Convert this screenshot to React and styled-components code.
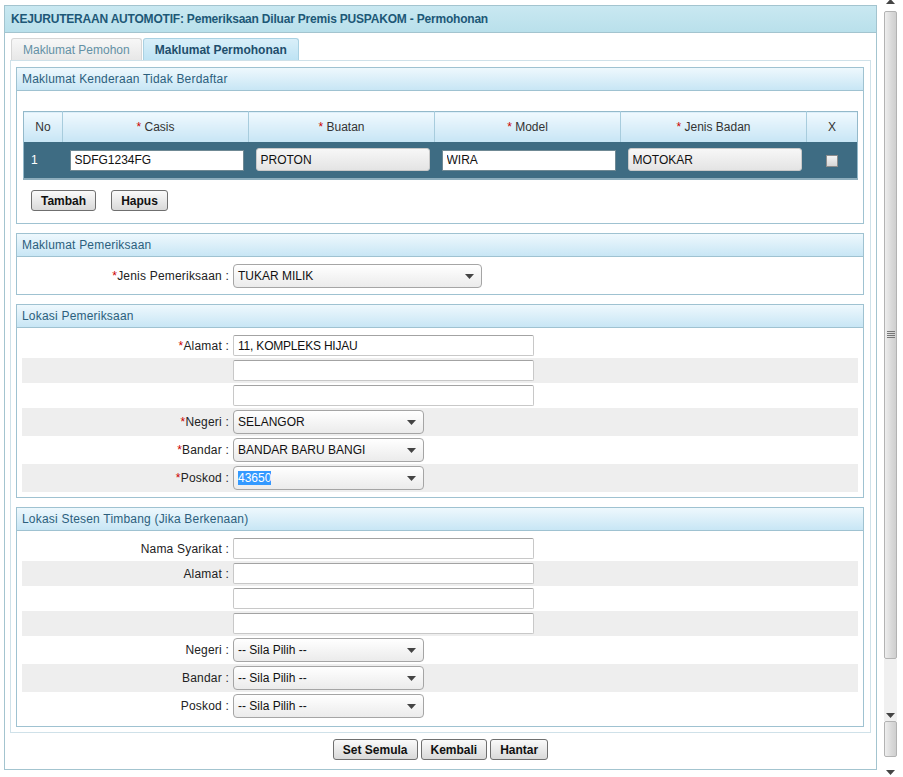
import React from "react";
import styled, { createGlobalStyle } from "styled-components";

const GlobalStyle = createGlobalStyle`
  html, body {
    margin: 0;
    padding: 0;
    background: #fff;
  }
  body {
    font-family: "Liberation Sans", Arial, sans-serif;
    font-size: 12px;
    color: #222;
  }
`;

const Page = styled.div`
  display: flex;
  height: 777px;
  overflow: hidden;
`;

const Main = styled.div`
  flex: 1;
  padding: 5px 2px 0 4px;
`;

const Panel = styled.div`
  border: 1px solid #a3c4cf;
`;

const PanelHeader = styled.div`
  height: 26px;
  line-height: 26px;
  padding-left: 6px;
  background: linear-gradient(#c9e8f1, #b9e0eb);
  border-bottom: 1px solid #a3c4cf;
  color: #1d5877;
  font-weight: bold;
  letter-spacing: -0.2px;
`;

const PanelBody = styled.div`
  padding: 5px 5px 9px 5px;
`;

const Tabs = styled.div`
  display: flex;
  gap: 1px;
  padding-left: 1px;
  height: 22px;
`;

const Tab = styled.div`
  height: 22px;
  line-height: 22px;
  padding: 0 11px;
  box-sizing: border-box;
  border: 1px solid ${(p) => (p.$active ? "#a9d1e2" : "#d6d6d6")};
  border-bottom: none;
  border-radius: 3px 3px 0 0;
  background: ${(p) =>
    p.$active
      ? "linear-gradient(#d9eff9, #bee3f4)"
      : "linear-gradient(#f7f7f7, #e7e7e7)"};
  color: ${(p) => (p.$active ? "#1e4e6c" : "#6390a5")};
  font-weight: ${(p) => (p.$active ? "bold" : "normal")};
`;

const TabPanel = styled.div`
  border: 1px solid #cfe1e9;
  padding: 6px 6px 5px 5px;
`;

const Section = styled.div`
  border: 1px solid #9fc2d1;
  background: #fff;
  & + & {
    margin-top: 9px;
  }
`;

const SectionHeader = styled.div`
  height: 22px;
  line-height: 22px;
  padding-left: 5px;
  background: linear-gradient(#eef8fd, #c8e6f5);
  border-bottom: 1px solid #9fc2d1;
  color: #2c5f7d;
  letter-spacing: 0.2px;
`;

const TableWrap = styled.div`
  padding: 20px 5px 0 6px;
`;

const Grid = styled.table`
  width: 834px;
  border-collapse: collapse;
  table-layout: fixed;
  border: 1px solid #94b9ca;
`;

const HeadCell = styled.th`
  height: 30px;
  padding: 0;
  font-weight: normal;
  color: #333;
  text-align: center;
  background: linear-gradient(#f0f9fe, #c7e5f5);
  border-left: 1px solid #a7ccdd;
  &:first-child {
    border-left: none;
  }
`;

const DataRow = styled.tr`
  background: #3e6c83;
  border-bottom: 2px solid #8eaebd;
`;

const DataCell = styled.td`
  height: 36px;
  padding: 0;
  padding-left: ${(p) => (p.$center ? "0" : "7px")};
  color: #fff;
  text-align: ${(p) => (p.$center ? "center" : "left")};
`;

const CellInput = styled.input`
  display: block;
  box-sizing: border-box;
  width: 174px;
  height: ${(p) => (p.$shaded ? "23px" : "21px")};
  margin-top: ${(p) => (p.$shaded ? "-1px" : "0")};
  padding: 0 4px;
  font: 12px "Liberation Sans", Arial, sans-serif;
  color: #111;
  border: 1px solid ${(p) => (p.$shaded ? "#c9c9c9" : "#6f8994")};
  border-radius: ${(p) => (p.$shaded ? "3px" : "0")};
  background: ${(p) =>
    p.$shaded ? "linear-gradient(#f7f7f7, #e4e4e4)" : "#fff"};
  outline: none;
`;

const Check = styled.span`
  display: inline-block;
  width: 12px;
  height: 12px;
  box-sizing: border-box;
  border: 1px solid #8d8d8d;
  background: linear-gradient(#f4f4f4, #d6d6d6);
  vertical-align: middle;
`;

const Req = styled.span`
  color: #cc0000;
`;

const ButtonRow = styled.div`
  display: flex;
  gap: ${(p) => p.$gap || 15}px;
  justify-content: ${(p) => (p.$center ? "center" : "flex-start")};
  padding: ${(p) => p.$pad};
`;

const Button = styled.button`
  height: 21px;
  padding: 0 9px;
  font: bold 12px "Liberation Sans", Arial, sans-serif;
  color: #111;
  border: 1px solid #6f6f6f;
  border-radius: 3px;
  background: linear-gradient(#fafafa, #d9d9d9);
  cursor: pointer;
`;

const FormBody = styled.div`
  padding: ${(p) => p.$pad || "5px"};
`;

const FormRow = styled.div`
  display: grid;
  grid-template-columns: 211px 1fr;
  align-items: center;
  height: ${(p) => (p.$tall ? 28 : 25)}px;
  background: ${(p) => (p.$shade ? "#eeeeee" : "transparent")};
`;

const Label = styled.div`
  text-align: right;
  padding-right: 4px;
  color: #222;
  white-space: nowrap;
  letter-spacing: 0.2px;
`;

const TextField = styled.input`
  box-sizing: border-box;
  width: 301px;
  height: 21px;
  padding: 0 4px;
  font: 12px "Liberation Sans", Arial, sans-serif;
  letter-spacing: -0.2px;
  color: #111;
  border: 1px solid #c8c8c8;
  border-top-color: #a3a3a3;
  border-radius: 2px;
  background: #fff;
  outline: none;
`;

const SelectBox = styled.div`
  box-sizing: border-box;
  width: ${(p) => p.$w}px;
  height: 24px;
  display: flex;
  align-items: center;
  justify-content: space-between;
  padding: 0 7px 0 4px;
  border: 1px solid #a5a5a5;
  border-radius: 4px;
  background: linear-gradient(#ffffff, #ebebeb);
  color: #111;
`;

const Picked = styled.span`
  background: ${(p) => (p.$selected ? "#3399ff" : "transparent")};
  color: ${(p) => (p.$selected ? "#fff" : "#111")};
`;

const Scroll = styled.div`
  width: 25px;
  display: flex;
  flex-direction: column;
  padding: 0 6px 0 5px;
  box-sizing: border-box;
`;

const Arrow = styled.div`
  height: ${(p) => p.$h}px;
  display: flex;
  justify-content: center;
  align-items: ${(p) => (p.$up ? "flex-start" : "flex-end")};
  padding-bottom: ${(p) => (p.$up ? 0 : 2)}px;
  box-sizing: border-box;
`;

const Thumb = styled.div`
  height: ${(p) => p.$h}px;
  box-sizing: border-box;
  border: 1px solid #b3b3b3;
  border-radius: 2px;
  background: linear-gradient(90deg, #eeeeee, #d9d9d9 60%, #cfcfcf);
  display: flex;
  align-items: center;
  justify-content: center;
`;

const Track = styled.div`
  height: ${(p) => p.$h}px;
  background: #f0f0f0;
  display: flex;
  justify-content: center;
  align-items: flex-end;
  padding-bottom: 3px;
  box-sizing: border-box;
`;

const Caret = ({ up }) => (
  <svg width="9" height="5" viewBox="0 0 9 5">
    <path d={up ? "M0 5 L4.5 0 L9 5 Z" : "M0 0 L9 0 L4.5 5 Z"} fill="#444" />
  </svg>
);

const Grip = () => (
  <svg width="8" height="8" viewBox="0 0 8 8">
    <path d="M0 0.5 H8 M0 2.5 H8 M0 4.5 H8 M0 6.5 H8" stroke="#777" strokeWidth="1" />
  </svg>
);

const Select = ({ w, value, selected }) => (
  <SelectBox $w={w}>
    <Picked $selected={selected}>{value}</Picked>
    <Caret />
  </SelectBox>
);

const Lbl = ({ req, children }) => (
  <Label>
    {req && <Req>*</Req>}
    {children}
  </Label>
);

const columns = [
  { key: "no", label: "No", width: 39 },
  { key: "casis", label: "Casis", width: 186, req: true },
  { key: "buatan", label: "Buatan", width: 186, req: true },
  { key: "model", label: "Model", width: 186, req: true },
  { key: "jenis", label: "Jenis Badan", width: 186, req: true },
  { key: "x", label: "X", width: 51 },
];

const vehicle = [
  { value: "SDFG1234FG", shaded: false },
  { value: "PROTON", shaded: true },
  { value: "WIRA", shaded: false },
  { value: "MOTOKAR", shaded: true },
];

const App = () => {
  return (
    <>
      <GlobalStyle />
      <Page>
        <Main>
          <Panel>
            <PanelHeader>
              KEJURUTERAAN AUTOMOTIF: Pemeriksaan Diluar Premis PUSPAKOM - Permohonan
            </PanelHeader>
            <PanelBody>
              <Tabs>
                <Tab>Maklumat Pemohon</Tab>
                <Tab $active>Maklumat Permohonan</Tab>
              </Tabs>
              <TabPanel>
                <Section>
                  <SectionHeader>Maklumat Kenderaan Tidak Berdaftar</SectionHeader>
                  <TableWrap>
                    <Grid>
                      <colgroup>
                        {columns.map((c) => (
                          <col key={c.key} style={{ width: c.width }} />
                        ))}
                      </colgroup>
                      <thead>
                        <tr>
                          {columns.map((c) => (
                            <HeadCell key={c.key}>
                              {c.req && <Req>* </Req>}
                              {c.label}
                            </HeadCell>
                          ))}
                        </tr>
                      </thead>
                      <tbody>
                        <DataRow>
                          <DataCell>1</DataCell>
                          {vehicle.map((v) => (
                            <DataCell key={v.value}>
                              <CellInput readOnly value={v.value} $shaded={v.shaded} />
                            </DataCell>
                          ))}
                          <DataCell $center>
                            <Check />
                          </DataCell>
                        </DataRow>
                      </tbody>
                    </Grid>
                  </TableWrap>
                  <ButtonRow $pad="10px 0 12px 14px">
                    <Button>Tambah</Button>
                    <Button>Hapus</Button>
                  </ButtonRow>
                </Section>

                <Section>
                  <SectionHeader>Maklumat Pemeriksaan</SectionHeader>
                  <FormBody $pad="5px 5px 4px">
                    <FormRow $tall>
                      <Lbl req>Jenis Pemeriksaan :</Lbl>
                      <Select w={249} value="TUKAR MILIK" />
                    </FormRow>
                  </FormBody>
                </Section>

                <Section>
                  <SectionHeader>Lokasi Pemeriksaan</SectionHeader>
                  <FormBody>
                    <FormRow>
                      <Lbl req>Alamat :</Lbl>
                      <TextField readOnly value="11, KOMPLEKS HIJAU" />
                    </FormRow>
                    <FormRow $shade>
                      <Lbl />
                      <TextField readOnly value="" />
                    </FormRow>
                    <FormRow>
                      <Lbl />
                      <TextField readOnly value="" />
                    </FormRow>
                    <FormRow $tall $shade>
                      <Lbl req>Negeri :</Lbl>
                      <Select w={191} value="SELANGOR" />
                    </FormRow>
                    <FormRow $tall>
                      <Lbl req>Bandar :</Lbl>
                      <Select w={191} value="BANDAR BARU BANGI" />
                    </FormRow>
                    <FormRow $tall $shade>
                      <Lbl req>Poskod :</Lbl>
                      <Select w={191} value="43650" selected />
                    </FormRow>
                  </FormBody>
                </Section>

                <Section>
                  <SectionHeader>Lokasi Stesen Timbang (Jika Berkenaan)</SectionHeader>
                  <FormBody $pad="5px 5px 6px">
                    <FormRow>
                      <Lbl>Nama Syarikat :</Lbl>
                      <TextField readOnly value="" />
                    </FormRow>
                    <FormRow $shade>
                      <Lbl>Alamat :</Lbl>
                      <TextField readOnly value="" />
                    </FormRow>
                    <FormRow>
                      <Lbl />
                      <TextField readOnly value="" />
                    </FormRow>
                    <FormRow $shade>
                      <Lbl />
                      <TextField readOnly value="" />
                    </FormRow>
                    <FormRow $tall>
                      <Lbl>Negeri :</Lbl>
                      <Select w={191} value="-- Sila Pilih --" />
                    </FormRow>
                    <FormRow $tall $shade>
                      <Lbl>Bandar :</Lbl>
                      <Select w={191} value="-- Sila Pilih --" />
                    </FormRow>
                    <FormRow $tall>
                      <Lbl>Poskod :</Lbl>
                      <Select w={191} value="-- Sila Pilih --" />
                    </FormRow>
                  </FormBody>
                </Section>
              </TabPanel>
              <ButtonRow $center $gap={3} $pad="6px 0 0">
                <Button>Set Semula</Button>
                <Button>Kembali</Button>
                <Button>Hantar</Button>
              </ButtonRow>
            </PanelBody>
          </Panel>
        </Main>
        <Scroll>
          <Arrow $h={11} $up>
            <svg width="9" height="5" viewBox="0 0 9 5" style={{ marginTop: -1 }}>
              <path d="M0 5 L4.5 0 L9 5 Z" fill="#444" />
            </svg>
          </Arrow>
          <Thumb $h={648}>
            <Grip />
          </Thumb>
          <Track $h={62}>
            <Caret />
          </Track>
          <Thumb $h={36} />
          <Arrow $h={20}>
            <Caret />
          </Arrow>
        </Scroll>
      </Page>
    </>
  );
};

export default App;
